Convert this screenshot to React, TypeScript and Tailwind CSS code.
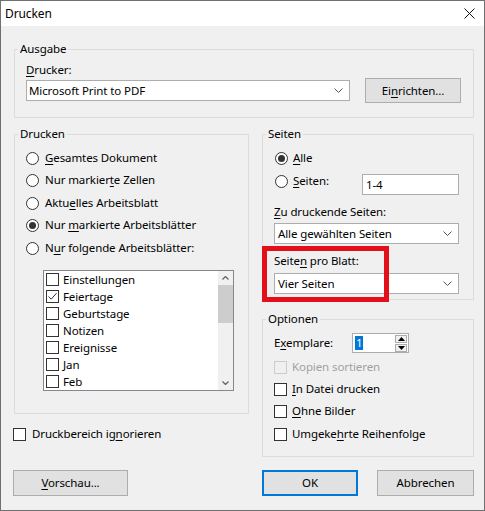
import type { ReactNode } from 'react'

function U({ children }: { children: ReactNode }) {
  return <span className="underline decoration-1 underline-offset-[2px]">{children}</span>
}

function Radio({ checked }: { checked?: boolean }) {
  return (
    <span className="flex h-[13px] w-[13px] shrink-0 items-center justify-center rounded-full border border-[#333333] bg-white">
      {checked && <span className="h-[7px] w-[7px] rounded-full bg-[#333333]" />}
    </span>
  )
}

function Check({ checked, disabled }: { checked?: boolean; disabled?: boolean }) {
  return (
    <span
      className={
        disabled
          ? 'flex h-[13px] w-[13px] shrink-0 border border-[#cccccc] bg-[#f0f0f0]'
          : 'flex h-[13px] w-[13px] shrink-0 items-center justify-center border border-[#333333] bg-white'
      }
    >
      {checked && (
        <svg width="11" height="11" viewBox="0 0 11 11" aria-hidden>
          <path d="M1.5 5.5 L4.2 8.2 L9.5 2.2" fill="none" stroke="#333" strokeWidth="1" />
        </svg>
      )}
    </span>
  )
}

function Chevron() {
  return (
    <svg width="9" height="5" viewBox="0 0 9 5" aria-hidden>
      <path d="M0.5 0.5 L4.5 4.5 L8.5 0.5" fill="none" stroke="#555" strokeWidth="1" />
    </svg>
  )
}

function Group({ title, className, children }: { title: string; className: string; children: ReactNode }) {
  return (
    <fieldset className={`min-w-0 border border-[#dcdcdc] p-0 ${className}`}>
      <legend className="ml-[3px] px-[2px] leading-[16px]">{title}</legend>
      {children}
    </fieldset>
  )
}

const sheets = ['Einstellungen', 'Feiertage', 'Geburtstage', 'Notizen', 'Ereignisse', 'Jan', 'Feb']

export default function App() {
  return (
    <div className="flex h-[511px] w-[485px] flex-col border border-[#707070] bg-[#f0f0f0] font-['Noto_Sans',sans-serif] text-[11.5px] leading-[16px] tracking-[-0.1px] text-black">
      {/* title bar */}
      <div className="flex h-[25px] shrink-0 items-center justify-between bg-white pl-[4px] pr-[9px]">
        <span className="text-[12px]">Drucken</span>
        <svg width="11" height="11" viewBox="0 0 11 11" aria-hidden>
          <path d="M0.5 0.5 L10.5 10.5 M10.5 0.5 L0.5 10.5" stroke="#111" strokeWidth="1" />
        </svg>
      </div>

      <div className="flex flex-col pl-[12px] pr-[10px]">
        {/* Ausgabe */}
        <Group title="Ausgabe" className="ml-[1px] mt-[15px] w-[460px]">
          <div className="flex flex-col pb-[14px] pl-[11px] pr-[12px] pt-[5px]">
            <div>
              <U>D</U>rucker:
            </div>
            <div className="flex items-center gap-[15px]">
              <div className="flex h-[21px] w-[324px] items-center justify-between border border-[#adadad] bg-white pl-[2px] pr-[6px]">
                <span>Microsoft Print to PDF</span>
                <Chevron />
              </div>
              <button className="h-[25px] w-[96px] border border-[#adadad] bg-[#e1e1e1]">
                Ei<U>n</U>richten...
              </button>
            </div>
          </div>
        </Group>

        <div className="mt-[8px] flex gap-[13px]">
          {/* left column */}
          <div className="flex flex-col">
            <Group title="Drucken" className="ml-[1px] w-[235px]">
              <div className="flex flex-col pb-[22px] pt-[8px]">
                {[
                  { t: <><U>G</U>esamtes Dokument</>, mt: 'mt-0' },
                  { t: <>Nur markier<U>t</U>e Zellen</>, mt: 'mt-[6px]' },
                  { t: <>Aktu<U>e</U>lles Arbeitsblatt</>, mt: 'mt-[7px]' },
                  { t: <>Nur <U>m</U>arkierte Arbeitsblätter</>, mt: 'mt-[6px]', on: true },
                  { t: <>N<U>u</U>r folgende Arbeitsblätter:</>, mt: 'mt-[7px]' },
                ].map((r, i) => (
                  <div key={i} className={`flex h-[16px] items-center gap-[6px] pl-[11px] ${r.mt}`}>
                    <Radio checked={r.on} />
                    <span>{r.t}</span>
                  </div>
                ))}

                <div className="ml-[28px] mt-[14px] flex h-[121px] w-[191px] border border-[#828790] bg-white">
                  <div className="flex flex-1 flex-col">
                    {sheets.map((s) => (
                      <div key={s} className="flex h-[17px] items-center gap-[4px] pl-[2px]">
                        <Check checked={s === 'Feiertage'} />
                        <span>{s}</span>
                      </div>
                    ))}
                  </div>
                  <div className="flex w-[15px] flex-col bg-[#f0f0f0]">
                    <div className="flex h-[14px] items-center justify-center">
                      <svg width="7" height="4" viewBox="0 0 7 4" aria-hidden>
                        <path d="M0.5 3.5 L3.5 0.5 L6.5 3.5" fill="none" stroke="#606060" strokeWidth="1.2" />
                      </svg>
                    </div>
                    <div className="flex-1">
                      <div className="h-[38px] bg-[#cdcdcd]" />
                    </div>
                    <div className="flex h-[14px] items-center justify-center">
                      <svg width="7" height="4" viewBox="0 0 7 4" aria-hidden>
                        <path d="M0.5 0.5 L3.5 3.5 L6.5 0.5" fill="none" stroke="#606060" strokeWidth="1.2" />
                      </svg>
                    </div>
                  </div>
                </div>
              </div>
            </Group>

            <div className="mt-[12px] flex h-[16px] items-center gap-[6px]">
              <Check />
              <span>
                Druckbereich ig<U>n</U>orieren
              </span>
            </div>
          </div>

          {/* right column */}
          <div className="flex flex-col">
            <div className="relative">
              <Group title="Seiten" className="w-[212px]">
                <div className="flex flex-col pb-[5px] pl-[11px] pr-[14px] pt-[8px]">
                  <div className="flex h-[16px] items-center gap-[5px] pl-[1px]">
                    <Radio checked />
                    <span>
                      <U>A</U>lle
                    </span>
                  </div>
                  <div className="mt-[7px] flex items-start justify-between">
                    <div className="flex h-[16px] items-center gap-[5px] pl-[1px]">
                      <Radio />
                      <span>
                        <U>S</U>eiten:
                      </span>
                    </div>
                    <div className="mt-[1px] flex h-[21px] w-[97px] items-center border border-[#adadad] bg-white pl-[3px]">
                      1-4
                    </div>
                  </div>
                  <div className="mt-[9px]">
                    <U>Z</U>u druckende Seiten:
                  </div>
                  <div className="mt-[3px] flex h-[21px] items-center justify-between border border-[#adadad] bg-white pl-[3px] pr-[6px]">
                    <span>Alle gewählten Seiten</span>
                    <Chevron />
                  </div>
                  <div className="mt-[9px]">
                    Seite<U>n</U> pro Blatt:
                  </div>
                  <div className="mt-[4px] flex h-[21px] items-center justify-between border border-[#adadad] bg-white pl-[3px] pr-[6px]">
                    <span>Vier Seiten</span>
                    <Chevron />
                  </div>
                </div>
              </Group>
              {/* annotation */}
              <div className="pointer-events-none absolute left-[0px] top-[120px] h-[56px] w-[127px] border-[5px] border-[#e3101a]" />
            </div>

            <Group title="Optionen" className="mt-[11px] w-[212px]">
              <div className="flex flex-col pb-[14px] pl-[11px] pt-[6px]">
                <div className="flex items-center">
                  <span className="w-[78px]">
                    E<U>x</U>emplare:
                  </span>
                  <div className="flex h-[20px] w-[57px] items-center justify-between border border-[#adadad] bg-white pl-[2px] pr-[1px]">
                    <span className="bg-[#0078d7] px-[1px] leading-[14px] text-white">1</span>
                    <div className="flex flex-col gap-[1px]">
                      <div className="flex h-[8px] w-[12px] items-center justify-center border border-[#adadad] bg-[#f0f0f0]">
                        <svg width="7" height="4" viewBox="0 0 7 4" aria-hidden>
                          <path d="M3.5 0 L7 4 L0 4 Z" fill="#000" />
                        </svg>
                      </div>
                      <div className="flex h-[8px] w-[12px] items-center justify-center border border-[#adadad] bg-[#f0f0f0]">
                        <svg width="7" height="4" viewBox="0 0 7 4" aria-hidden>
                          <path d="M0 0 L7 0 L3.5 4 Z" fill="#000" />
                        </svg>
                      </div>
                    </div>
                  </div>
                </div>
                <div className="mt-[6px] flex h-[16px] items-center gap-[5px] text-[#a0a0a0]">
                  <Check disabled />
                  <span>Kopien sortieren</span>
                </div>
                <div className="mt-[6px] flex h-[16px] items-center gap-[5px]">
                  <Check />
                  <span>
                    <U>I</U>n Datei drucken
                  </span>
                </div>
                <div className="mt-[6px] flex h-[16px] items-center gap-[5px]">
                  <Check />
                  <span>
                    <U>O</U>hne Bilder
                  </span>
                </div>
                <div className="mt-[7px] flex h-[16px] items-center gap-[5px]">
                  <Check />
                  <span>
                    Umgeke<U>h</U>rte Reihenfolge
                  </span>
                </div>
              </div>
            </Group>
          </div>
        </div>

        {/* buttons */}
        <div className="mt-[13px] flex items-center">
          <button className="h-[26px] w-[115px] border border-[#adadad] bg-[#e1e1e1]">
            <U>V</U>orschau...
          </button>
          <button className="ml-[134px] h-[26px] w-[96px] border-2 border-[#0078d7] bg-[#e1e1e1]">OK</button>
          <button className="ml-[19px] h-[26px] w-[97px] border border-[#adadad] bg-[#e1e1e1]">Abbrechen</button>
        </div>
      </div>
    </div>
  )
}
